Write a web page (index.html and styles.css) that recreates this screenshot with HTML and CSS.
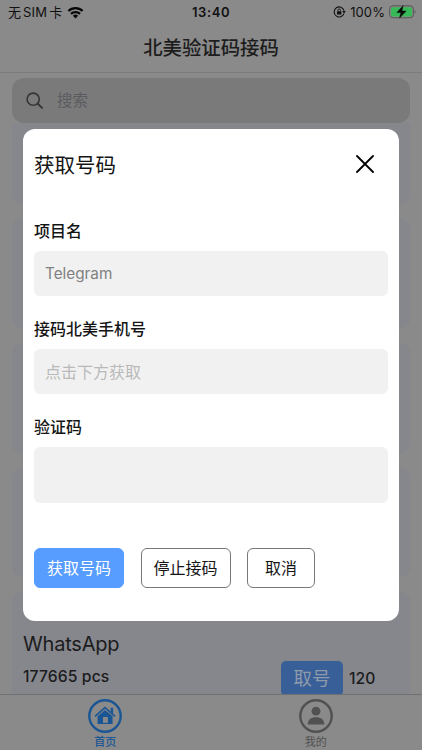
FILE: index.html
```html
<!DOCTYPE html>
<html lang="zh-CN">
<head>
    <meta charset="utf-8">
    <title>北美验证码接码</title>
    <link rel="stylesheet" href="styles.css">
</head>
<body>
    <div class="app">
        <div class="status">
            <div class="status-left">
                <span class="carrier">无<span class="sim">SIM</span>卡</span>
                <svg class="wifi" width="17" height="13" viewBox="0 0 17 13">
                    <path d="M1.4 5a10.2 10.2 0 0 1 14.2 0M4 7.9a6.5 6.5 0 0 1 9 0" fill="none" stroke="#070707" stroke-width="2.3"/>
                    <path d="M8.5 12.4 5.9 9.8a3.8 3.8 0 0 1 5.2 0z" fill="#070707"/>
                </svg>
            </div>
            <span class="clock">13:40</span>
            <div class="status-right">
                <svg width="13" height="12" viewBox="0 0 13 12">
                    <path d="M10.9 7.6A5 5 0 1 1 11 4.6" fill="none" stroke="#111" stroke-width="1.1"/>
                    <path d="M9.2 5h3.6L11 7.6z" fill="#111"/>
                    <rect x="4" y="5.2" width="4.4" height="3.4" rx=".5" fill="#111"/>
                    <path d="M4.9 5.4V4.3a1.3 1.3 0 0 1 2.6 0v1.1" fill="none" stroke="#111" stroke-width=".9"/>
                </svg>
                <span class="percent">100%</span>
                <svg width="28" height="14" viewBox="0 0 28 14">
                    <rect x=".6" y=".8" width="23.8" height="12" rx="3.4" fill="none" stroke="#555" stroke-width="1"/>
                    <rect x="2" y="2.2" width="21" height="9.2" rx="2" fill="#36b956"/>
                    <path d="M25.6 4.8c1.5.6 1.5 3.4 0 4z" fill="#666"/>
                    <path d="M14.2.6 7.8 7.6h4.1L10.5 13.1 17.2 6H13z" fill="#080808" stroke="#080808" stroke-width=".4"/>
                </svg>
            </div>
        </div>
        <div class="navbar">北美验证码接码</div>

        <div class="search-wrap">
            <div class="search">
                <svg width="18" height="18" viewBox="0 0 18 18" fill="none" stroke="#353535" stroke-width="1.6" stroke-linecap="round">
                    <circle cx="7.2" cy="7.2" r="6.1"/>
                    <path d="M11.7 11.8l4.4 4.1" stroke-width="1.9"/>
                </svg>
                <span>搜索</span>
            </div>
        </div>

        <div class="list">
            <div class="card card-cut"></div>
            <div class="card"></div>
            <div class="card"></div>
            <div class="card"></div>
            <div class="card">
                <div class="name">WhatsApp</div>
                <div class="row">
                    <span class="count">177665 pcs</span>
                    <span class="take">取号</span>
                    <span class="price">120</span>
                </div>
            </div>
        </div>

        <div class="tabbar">
            <div class="tab active">
                <svg width="34" height="34" viewBox="0 0 34 34">
                    <circle cx="17" cy="17" r="15.7" fill="none" stroke="#1b5694" stroke-width="2.4"/>
                    <path d="M7 17.3 17 8.6l10 8.7" fill="none" stroke="#1b5694" stroke-width="1.6"/>
                    <path d="M22.6 8.7h2.5v6l-2.5-2.2z" fill="#1b5694"/>
                    <path d="M9.6 17.2 17 11l7.6 6.2v7.7H9.6z" fill="#1b5694"/>
                    <rect x="15" y="18" width="4.8" height="5.8" fill="#8a8a8a"/>
                </svg>
                <span>首页</span>
            </div>
            <div class="tab">
                <svg width="34" height="34" viewBox="0 0 34 34">
                    <circle cx="17" cy="17" r="15.7" fill="none" stroke="#515151" stroke-width="2.4"/>
                    <circle cx="17" cy="12.2" r="4.4" fill="#515151"/>
                    <path d="M8.7 25.4c0-5 3.2-7.2 8.3-7.2s8.3 2.2 8.3 7.2z" fill="#515151"/>
                </svg>
                <span>我的</span>
            </div>
        </div>
    </div>

    <div class="modal">
        <div class="modal-head">
            <span>获取号码</span>
            <svg width="18" height="18" viewBox="0 0 18 18" stroke="#000" stroke-width="1.8" stroke-linecap="round">
                <path d="M1 1l16 16M17 1L1 17"/>
            </svg>
        </div>
        <div class="label">项目名</div>
        <div class="field value">Telegram</div>
        <div class="label">接码北美手机号</div>
        <div class="field">点击下方获取</div>
        <div class="label">验证码</div>
        <div class="field code"></div>
        <div class="buttons">
            <div class="btn primary">获取号码</div>
            <div class="btn">停止接码</div>
            <div class="btn cancel">取消</div>
        </div>
    </div>
</body>
</html>
```
FILE: styles.css
```css
*{
    box-sizing: border-box;
}

body{
    margin: 0;
    background-color: #8a8a8a;
    font-family: Inter, "Noto Sans CJK SC", sans-serif;
    color: #1b1b1d;
}

svg{
    display: block;
    flex-shrink: 0;
}

.app{
    display: flex;
    flex-direction: column;
    height: 750px;
    overflow: hidden;
}

/* top */
.status{
    display: grid;
    grid-template-columns: 1fr auto 1fr;
    align-items: center;
    height: 24px;
    padding: 0 5px 0 8px;
    font-size: 13px;
    line-height: 24px;
    color: #111;
}

.status-left{
    display: flex;
    align-items: center;
    gap: 5px;
}

.sim{
    font-size: 13px;
    letter-spacing: 0.2px;
    margin: 0 2px;
}

.clock{
    font-weight: 600;
    letter-spacing: 0.6px;
    margin-left: -3px;
}

.status-right{
    display: flex;
    align-items: center;
    justify-content: flex-end;
    gap: 4px;
}

.percent{
    letter-spacing: 0.1px;
}

.navbar{
    height: 49px;
    line-height: 48px;
    text-align: center;
    font-size: 19.4px;
    font-weight: 500;
    color: #1d1d1d;
    border-bottom: 1px solid #7b7b7b;
}

.search-wrap{
    padding: 5px 12px 0;
}

.search{
    display: flex;
    align-items: center;
    gap: 13px;
    height: 45px;
    padding-left: 14px;
    border-radius: 12px;
    background-color: #7a7a7a;
    color: #5c5c60;
    font-size: 15.5px;
    line-height: 20px;
}

/* list */
.list{
    flex: 1;
    min-height: 0;
    overflow: hidden;
    padding: 0 12px;
    display: flex;
    flex-direction: column;
    gap: 15px;
}

.card{
    flex-shrink: 0;
    height: 109.4px;
    border-radius: 9px;
    background-color: #86878c;
    padding: 38px 11px 0;
}

.card-cut{
    height: 81px;
    border-radius: 0 0 9px 9px;
}

.name{
    font-size: 20px;
    line-height: 28px;
    letter-spacing: -0.2px;
}

.row{
    display: flex;
    align-items: flex-start;
    font-size: 15.7px;
    font-weight: 450;
}

.count{
    flex: 1;
    line-height: 37px;
    letter-spacing: 0.1px;
}

.take{
    width: 62px;
    height: 35px;
    margin-top: 3px;
    border-radius: 5px;
    background-color: #385f98;
    color: #8f9aab;
    font-size: 18.5px;
    font-weight: 400;
    line-height: 35px;
    text-align: center;
}

.price{
    width: 50px;
    margin: 2px 0 0 6px;
    line-height: 37px;
}

/* bottom tabs */
.tabbar{
    display: flex;
    height: 56px;
    padding-right: 1px;
    border-top: 1px solid #6f7074;
    background-color: #8a8a8a;
}

.tab{
    flex: 1;
    display: flex;
    flex-direction: column;
    align-items: center;
    padding-top: 4px;
    font-size: 11px;
    line-height: 18px;
    color: #515151;
}

.active{
    color: #1b5694;
    font-weight: 500;
}

/* popup */
.modal{
    position: absolute;
    left: 23px;
    top: 129px;
    width: 376px;
    height: 492px;
    padding: 0 11px;
    border-radius: 12px;
    background-color: #fff;
    color: #151515;
}

.modal-head{
    display: flex;
    align-items: center;
    justify-content: space-between;
    height: 69px;
    padding-right: 14px;
    font-size: 20.5px;
    margin-bottom: 20px;
}

.label{
    height: 33px;
    line-height: 26px;
    font-size: 16px;
    font-weight: 500;
}

.field{
    height: 45px;
    line-height: 46px;
    margin-bottom: 20px;
    padding-left: 11px;
    border-radius: 6px;
    background-color: #f1f1f1;
    font-size: 16px;
    color: #b9b9b9;
}

.value{
    color: #808080;
    font-size: 15.3px;
}

.code{
    height: 56px;
    margin-bottom: 45px;
}

.buttons{
    display: flex;
    gap: 16.5px;
}

.btn{
    width: 90px;
    height: 39.5px;
    line-height: 38px;
    border: 1px solid #777;
    border-radius: 6px;
    text-align: center;
    font-size: 16px;
}

.primary{
    border-color: #579cff;
    background-color: #579cff;
    color: #fff;
}

.cancel{
    width: 68px;
}
```
